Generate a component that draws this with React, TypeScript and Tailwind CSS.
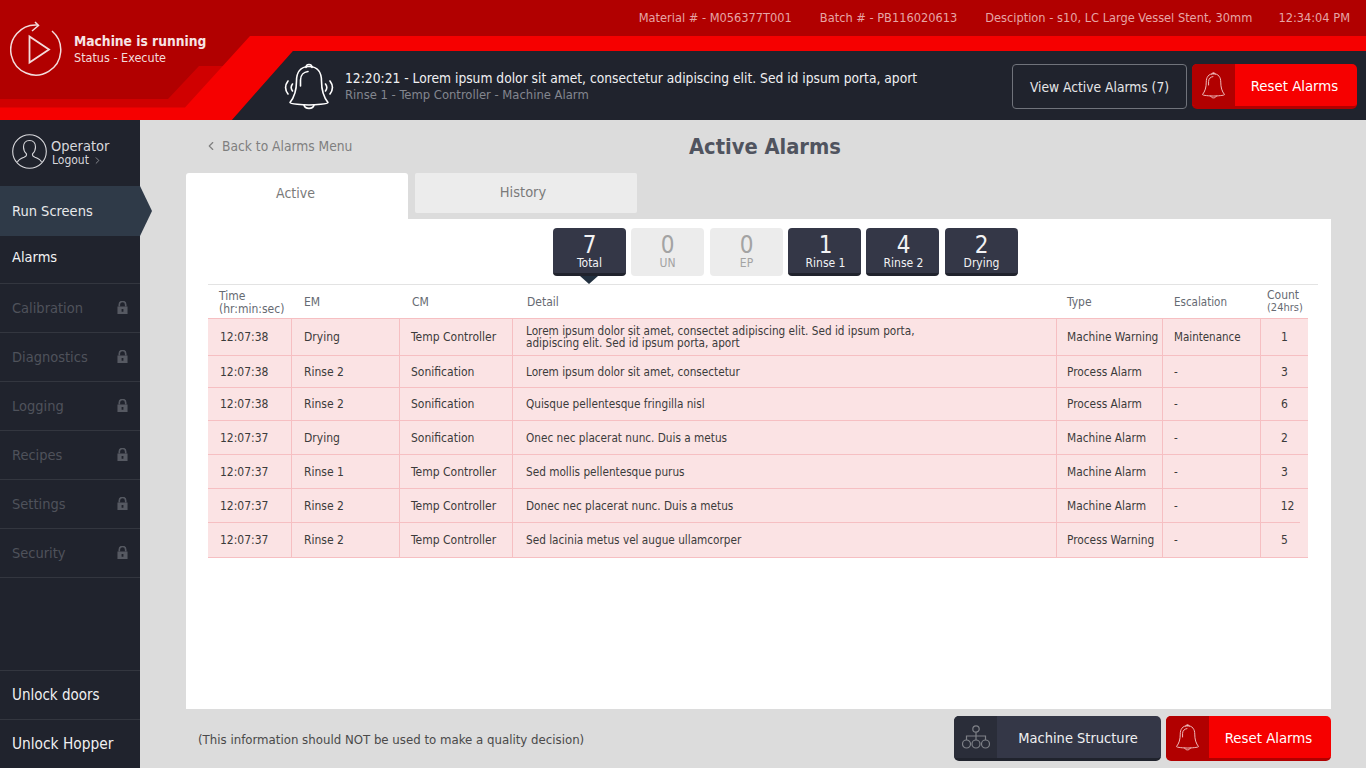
import { ChevronLeft, ChevronRight } from "lucide-react";

const Bell = ({ className = "", waves = false }: { className?: string; waves?: boolean }) => (
  <svg viewBox="0 0 50 48" fill="none" stroke="currentColor" strokeWidth="1.6" strokeLinejoin="round" strokeLinecap="round" className={className}>
    <path d="M22 5.5 C22 1.5 28 1.5 28 5.5" />
    <path d="M25 4.5 C16 4.5 12.5 11 12.5 19 C12.5 28 10.5 35 6 40.5 C6 42 19 43 25 43 C31 43 44 42 44 40.5 C39.5 35 37.5 28 37.5 19 C37.5 11 34 4.5 25 4.5 Z" />
    <path d="M16.5 24 L16.5 18 C16.5 13 20 10 24 9.5" />
    <path d="M20 43 C21 47.5 29 47.5 30 43" />
    {waves && (
      <>
        <path d="M4 19 C1 23 1 28 4 32" />
        <path d="M8.5 22 C7 24 7 27 8.5 29" />
        <path d="M46 19 C49 23 49 28 46 32" />
        <path d="M41.5 22 C43 24 43 27 41.5 29" />
      </>
    )}
  </svg>
);

const Lock = () => (
  <svg viewBox="0 0 12 14" className="w-[11px] h-[13px] text-[#565962]">
    <path d="M2.5 6 V4 a3.5 3.5 0 0 1 7 0 V6" fill="none" stroke="currentColor" strokeWidth="1.8" />
    <path fillRule="evenodd" fill="currentColor" d="M0.5 6 H11.5 V14 H0.5 Z M5 8.5 V11.5 H7 V8.5 Z" />
  </svg>
);

const rows = [
  { h: "h-[37px]", t: "12:07:38", em: "Drying", cm: "Temp Controller", d: "Lorem ipsum dolor sit amet, consectet adipiscing elit. Sed id ipsum porta,\nadipiscing elit. Sed id ipsum porta, aport", ty: "Machine Warning", e: "Maintenance", c: "1" },
  { h: "h-[32px]", t: "12:07:38", em: "Rinse 2", cm: "Sonification", d: "Lorem ipsum dolor sit amet, consectetur", ty: "Process Alarm", e: "-", c: "3" },
  { h: "h-[33px]", t: "12:07:38", em: "Rinse 2", cm: "Sonification", d: "Quisque pellentesque fringilla nisl", ty: "Process Alarm", e: "-", c: "6" },
  { h: "h-[34px]", t: "12:07:37", em: "Drying", cm: "Sonification", d: "Onec nec placerat nunc. Duis a metus", ty: "Machine Alarm", e: "-", c: "2" },
  { h: "h-[34px]", t: "12:07:37", em: "Rinse 1", cm: "Temp Controller", d: "Sed mollis pellentesque purus", ty: "Machine Alarm", e: "-", c: "3" },
  { h: "h-[34px]", t: "12:07:37", em: "Rinse 2", cm: "Temp Controller", d: "Donec nec placerat nunc. Duis a metus", ty: "Machine Alarm", e: "-", c: "12" },
  { h: "h-[35px]", t: "12:07:37", em: "Rinse 2", cm: "Temp Controller", d: "Sed lacinia metus vel augue ullamcorper", ty: "Process Warning", e: "-", c: "5" },
];

const chips = [
  { n: "7", l: "Total", on: true, x: "" },
  { n: "0", l: "UN", on: false, x: "" },
  { n: "0", l: "EP", on: false, x: "ml-[1px]" },
  { n: "1", l: "Rinse 1", on: true, x: "pl-[2px]" },
  { n: "4", l: "Rinse 2", on: true, x: "pl-[2px]" },
  { n: "2", l: "Drying", on: true, x: "ml-[1px]" },
];

const locked = ["Calibration", "Diagnostics", "Logging", "Recipes", "Settings", "Security"];
const cols = "grid grid-cols-[84px_108px_113px_544px_106px_98px_47px]";

export default function App() {
  return (
    <div className="w-[1366px] h-[768px] overflow-hidden flex flex-col bg-[#dcdcdc] font-['DejaVu_Sans',sans-serif] font-stretch-condensed">
      <header className="relative h-[120px] flex shrink-0 bg-[#b10000] text-white">
        <svg viewBox="0 0 1366 120" className="absolute inset-0 w-[1366px] h-[120px]">
          <path fill="#d00000" d="M0 99 H168 L199 66 H225 V108 H0 Z" />
          <path fill="#f60000" d="M0 107.500 H185 L250 36 H1366 V51 H293 L232 120 H0 Z" />
          <path fill="#20232d" d="M293 51 H1366 V120 H232 Z" />
        </svg>
        <div className="relative w-[283px] shrink-0 flex items-start pl-[10px] pt-[20px] gap-[11px]">
          <svg viewBox="0 0 53 56" fill="none" stroke="#f3dcdc" strokeWidth="1.5" className="w-[53px] h-[56px]">
            <path d="M28 5.100 A25 25 0 1 0 42 11" />
            <path d="M25 2 L28.500 5.500 L22 11" />
            <path d="M19.500 16.500 V42.500 L39 29.500 Z" strokeWidth="1.8" />
          </svg>
          <div className="pt-[13px]">
            <div className="text-[13.700px] leading-[17px] font-bold text-[#f7e4e4]">Machine is running</div>
            <div className="text-[12.500px] leading-[16px] text-[#f3dcdc]">Status - Execute</div>
          </div>
        </div>
        <div className="relative flex-1 flex flex-col">
          <div className="h-[36px] flex items-center justify-end pr-[16px] text-[12.700px] text-[#e6a5a5] whitespace-nowrap">
            <span>Material # - M056377T001</span>
            <span className="ml-[28px]">Batch # - PB116020613</span>
            <span className="ml-[28px]">Desciption - s10, LC Large Vessel Stent, 30mm</span>
            <span className="ml-[26px]">12:34:04 PM</span>
          </div>
          <div className="h-[15px]" />
          <div className="h-[69px] flex items-center">
            <Bell waves className="w-[52px] h-[48px] text-white" />
            <div className="ml-[10px] whitespace-nowrap">
              <div className="text-[13.700px] leading-[17px] text-[#f0f0f2]">12:20:21 - Lorem ipsum dolor sit amet, consectetur adipiscing elit. Sed id ipsum porta, aport</div>
              <div className="text-[12.900px] leading-[15px] text-[#83868f]">Rinse 1 - Temp Controller - Machine Alarm</div>
            </div>
            <div className="ml-auto mr-[9px] flex items-center gap-[5px] pt-[2px]">
              <button className="w-[175px] h-[45px] rounded-[4px] border border-[#70737b] text-[13.700px] text-[#e6e6e8] pt-[2px]">View Active Alarms (7)</button>
              <button className="w-[165px] h-[45px] flex rounded-[5px] overflow-hidden bg-[#f60000] border-b-[3px] border-[#b10000] text-[14.800px] text-white">
                <span className="w-[43px] h-full bg-[#b10000] flex items-center justify-center"><Bell className="w-[29px] h-[28px] text-[#f3c8c8]" /></span>
                <span className="flex-1 flex items-center justify-center pt-[2px] pr-[3px]">Reset Alarms</span>
              </button>
            </div>
          </div>
        </div>
      </header>

      <div className="flex-1 flex min-h-0">
        <aside className="w-[140px] shrink-0 bg-[#20232d] flex flex-col text-[15px]">
          <div className="h-[66px] flex items-start pl-[12px] pt-[14px] gap-[4px]">
            <svg viewBox="0 0 35 35" fill="none" stroke="#d8d8dc" strokeWidth="1.1" className="w-[35px] h-[35px]">
              <circle cx="17.500" cy="17.500" r="16.800" />
              <path d="M17.500 6.500 C13.500 6.500 11.500 9.500 11.500 13 C11.500 16 13 18.500 14.500 19.800 C14.800 21.500 14 22.500 12 23.300 C8.500 24.500 6.500 25.800 5.500 28 M17.500 6.500 C21.500 6.500 23.500 9.500 23.500 13 C23.500 16 22 18.500 20.500 19.800 C20.200 21.500 21 22.500 23 23.300 C26.500 24.500 28.500 25.800 29.500 28" />
            </svg>
            <div className="pt-[5px]">
              <div className="text-[14.500px] leading-[14px] text-[#d8d8dc]">Operator</div>
              <div className="text-[12px] leading-[14px] text-[#d8d8dc] flex items-center gap-[3px] pl-[1px]">Logout <ChevronRight className="w-[11px] h-[11px] text-[#8d8f96]" /></div>
            </div>
          </div>
          <div className="relative h-[50px] bg-[#2f3a48] flex items-center pl-[12px] pt-[2px] text-[#e8e9eb] text-[14.500px]">
            Run Screens
            <svg viewBox="0 0 12 50" className="absolute left-full top-0 w-[12px] h-[50px]"><path fill="#2f3a48" d="M0 0 L12 25 L0 50 Z" /></svg>
          </div>
          <div className="h-[48px] flex items-center pl-[12px] pb-[3px] border-b border-[#33363f] text-[#f4f4f5] text-[14.500px]">Alarms</div>
          {locked.map((l) => (
            <div key={l} className="h-[49px] flex items-center justify-between pl-[12px] pr-[12px] border-b border-[#33363f] text-[#4f525b] text-[14.500px]">
              <span className="pt-[2px]">{l}</span>
              <span className="pb-[2px] flex"><Lock /></span>
            </div>
          ))}
          <div className="mt-auto h-[49px] flex items-center pl-[12px] pt-[1px] border-t border-[#33363f] text-[#f0f0f2] text-[15px]">Unlock doors</div>
          <div className="h-[49px] flex items-center pl-[12px] pt-[1px] border-t border-[#33363f] text-[#f0f0f2] text-[15.300px]">Unlock Hopper</div>
        </aside>

        <main className="relative w-[1226px] min-w-0 flex flex-col pl-[46px] pr-[35px]">
          <div className="relative h-[53px] flex items-center">
            <div className="flex items-center pl-[19px] text-[13.700px] text-[#7f7f7f]">
              <ChevronLeft className="w-[14px] h-[14px] -ml-[1px] mr-[4px]" />Back to Alarms Menu
            </div>
            <h1 className="absolute left-[503px] top-[12px] text-[21.700px] font-bold leading-[30px] text-[#50545f]">Active Alarms</h1>
          </div>
          <div className="h-[46px] flex items-start gap-[7px] text-[14px] text-[#7a7a7a]">
            <div className="w-[222px] h-[46px] bg-white rounded-t-[3px] flex items-center justify-center pb-[6px] pr-[3px]">Active</div>
            <div className="w-[222px] h-[40px] bg-[#ececec] rounded-[2px] flex items-center justify-center pr-[6px] text-[14.500px]">History</div>
          </div>
          <section className="h-[490px] w-[1145px] bg-white flex flex-col pl-[22px] shrink-0">
            <div className="h-[65px] flex justify-start pl-[345px] pt-[9px] gap-[5px]">
              {chips.map((c) => (
                <div key={c.l + c.n} className={"relative w-[73px] h-[48px] rounded-[4px] flex flex-col items-center " + c.x + " " + (c.on ? "bg-[#343747] border-b-[3px] border-[#20232d] text-[#f2f2f4]" : "bg-[#ececec] text-[#a3a3a3]")}>
                  <span className="block text-[24px] leading-[24px] pt-[5px] h-[29px]">{c.n}</span>
                  <span className="block text-[12px] leading-[13px]">{c.l}</span>
                  {c.l === "Total" && (
                    <svg viewBox="0 0 18 8" className="absolute left-[27px] top-[48px] w-[18px] h-[8px]"><path fill="#22303f" d="M0 0 H18 L9 8 Z" /></svg>
                  )}
                </div>
              ))}
            </div>
            <div className="w-[1110px] border-t border-[#e3e3e3] h-[34px] text-[12px] text-[#666a72]">
              <div className={cols + " h-[33px] w-[1100px] items-center leading-[12px]"}>
                <div className="pl-[11px] text-[12px] leading-[13px] pt-[2px] whitespace-nowrap">Time<br /><span className="text-[12px]">(hr:min:sec)</span></div>
                <div className="pl-[12px]">EM</div>
                <div className="pl-[12px]">CM</div>
                <div className="pl-[14px]">Detail</div>
                <div className="pl-[10px]">Type</div>
                <div className="pl-[11px] text-[11.500px]">Escalation</div>
                <div className="pl-[6px] whitespace-nowrap">Count<br /><span className="text-[11px]">(24hrs)</span></div>
              </div>
            </div>
            <div className="w-[1100px] border-t border-[#f6bfc2] text-[12px] text-[#3b3b3b]">
              {rows.map((r, i) => (
                <div key={i} className={cols + " relative bg-[#fbe3e4] border-b border-[#f6bfc2] box-border " + r.h}>
                  <div className="flex items-center pl-[12px] border-r border-[#f6bfc2]">{r.t}</div>
                  <div className="flex items-center pl-[12px] border-r border-[#f6bfc2]">{r.em}</div>
                  <div className="flex items-center pl-[11px] border-r border-[#f6bfc2]">{r.cm}</div>
                  <div className="flex items-center pl-[13px] border-r border-[#f6bfc2] whitespace-pre-line leading-[12px] text-[11.700px]">{r.d}</div>
                  <div className="flex items-center pl-[10px] pt-[2px] border-r border-[#f6bfc2] whitespace-nowrap text-[11.800px]">{r.ty}</div>
                  <div className="flex items-center pl-[11px] pt-[2px] border-r border-[#f6bfc2] text-[11.500px]">{r.e}</div>
                  <div className={"flex items-center justify-center " + (r.c === "12" ? "pl-[6px]" : "")}>{r.c}</div>
                  {i === 5 && <span className="absolute right-0 bottom-[-1px] w-[8px] h-[1px] bg-[#fbe3e4]" />}
                </div>
              ))}
            </div>
          </section>
          <div className="flex-1 flex items-center">
            <div className="pl-[12px] pt-[2px] text-[13.100px] text-[#4a4a4a]">(This information should NOT be used to make a quality decision)</div>
            <div className="ml-auto flex gap-[5px]">
              <button className="w-[207px] h-[45px] flex rounded-[5px] overflow-hidden bg-[#343747] border-b-[3px] border-[#20232d] text-[14.500px] text-[#f0f0f2]">
                <span className="w-[43px] h-full bg-[#2a2d39] flex items-center justify-center">
                  <svg viewBox="0 0 28 24" fill="none" stroke="#7e8087" strokeWidth="1.200" className="w-[28px] h-[24px]">
                    <circle cx="14" cy="4" r="3.200" /><circle cx="4.500" cy="19" r="4" /><circle cx="14" cy="19" r="4" /><circle cx="23.500" cy="19" r="4" />
                    <path d="M14 7.200 V15 M14 11 H4.500 V15 M14 11 H23.500 V15" />
                  </svg>
                </span>
                <span className="flex-1 flex items-center justify-center pt-[3px] pr-[2px]">Machine Structure</span>
              </button>
              <button className="w-[165px] h-[45px] flex rounded-[5px] overflow-hidden bg-[#f60000] border-b-[3px] border-[#b10000] text-[14.800px] text-white">
                <span className="w-[43px] h-full bg-[#b10000] flex items-center justify-center"><Bell className="w-[29px] h-[28px] text-[#f3c8c8]" /></span>
                <span className="flex-1 flex items-center justify-center pt-[2px] pr-[3px]">Reset Alarms</span>
              </button>
            </div>
          </div>
        </main>
      </div>
    </div>
  );
}
